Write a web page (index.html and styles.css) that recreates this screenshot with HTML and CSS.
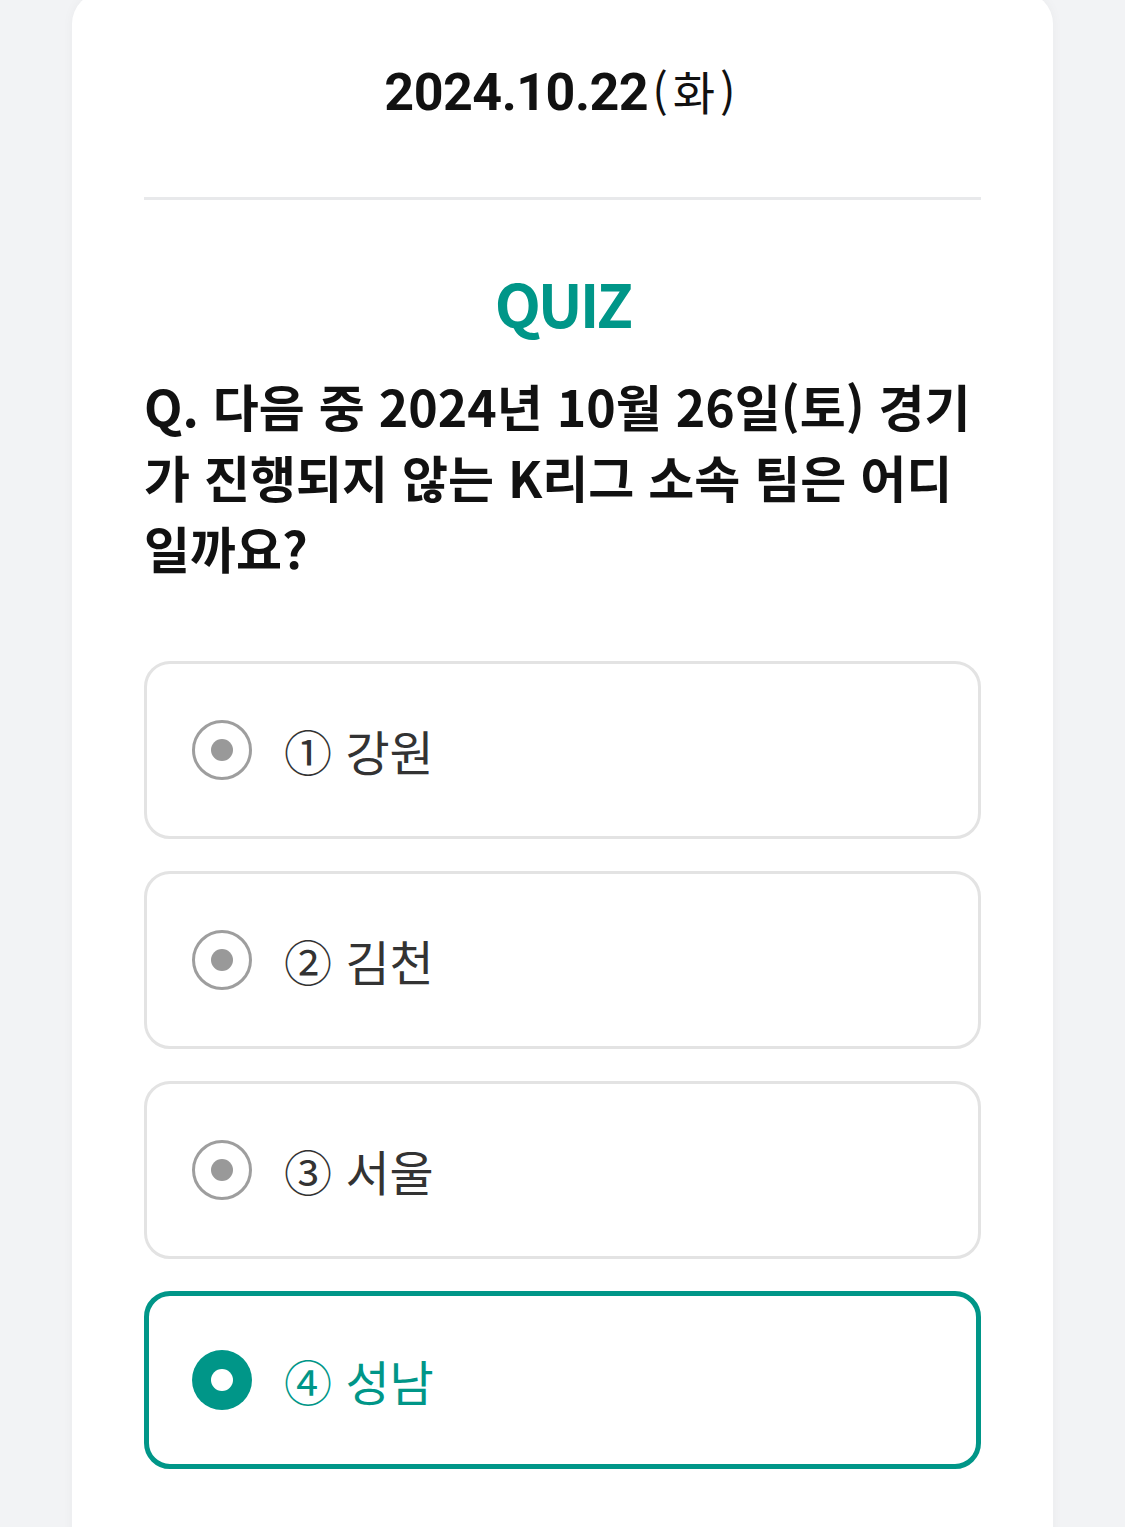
FILE: index.html
```html
<!DOCTYPE html>
<html lang="ko">
<head>
    <meta charset="UTF-8">
    <meta name="viewport" content="width=device-width, initial-scale=1.0">
    <title>Quiz</title>
    <link rel="stylesheet" href="styles.css">
</head>
<body>
    <div class="card">
        <div class="date">2024.10.22<span class="day">(화)</span></div>

        <hr class="divider">

        <h2 class="quiz-title">QUIZ</h2>
        <p class="question">Q. 다음 중 2024년 10월 26일(토) 경기가 진행되지 않는 K리그 소속 팀은 어디일까요?</p>

        <div class="options">
            <label class="option">
                <span class="radio"></span>
                <span class="option-text">① 강원</span>
            </label>
            <label class="option">
                <span class="radio"></span>
                <span class="option-text">② 김천</span>
            </label>
            <label class="option">
                <span class="radio"></span>
                <span class="option-text">③ 서울</span>
            </label>
            <label class="option selected">
                <span class="radio"></span>
                <span class="option-text">④ 성남</span>
            </label>
        </div>
    </div>
</body>
</html>
```

FILE: styles.css
```css
/* 기본 스타일 */
body {
    margin: 0;
    padding: 0 72px;
    background-color: #f2f3f5;
    font-family: Roboto, "Noto Sans CJK KR", sans-serif;
    color: #111;
}

.card {
    margin-top: -8px;
    padding: 68px 72px 80px;
    min-height: 1500px;
    background-color: #ffffff;
    border-radius: 32px;
    box-shadow: 0 0 12px rgba(0, 0, 0, 0.04);
}

.date {
    text-align: center;
    font-family: Roboto, sans-serif;
    font-size: 52px;
    font-weight: 700;
    line-height: 60px;
    letter-spacing: -0.5px;
}

.day {
    font-family: "Noto Sans CJK KR", sans-serif;
    font-weight: 400;
    font-size: 46px;
    letter-spacing: 5px;
    margin-left: 4px;
}

.divider {
    border: none;
    height: 3px;
    background-color: #e8e9eb;
    margin: 74px 0 0;
}

.quiz-title {
    margin: 66px 0 0;
    text-align: center;
    color: #009688;
    font-family: "Noto Sans CJK KR", sans-serif;
    font-size: 60px;
    font-weight: 700;
    line-height: 72px;
    letter-spacing: -3px;
}

.question {
    margin: 32px 0 0;
    font-family: "Noto Sans CJK KR", sans-serif;
    font-size: 50px;
    font-weight: 700;
    line-height: 71px;
    color: #111;
}

.options {
    display: flex;
    flex-direction: column;
    gap: 32px;
    margin-top: 78px;
}

.option {
    display: flex;
    align-items: center;
    gap: 32px;
    height: 178px;
    box-sizing: border-box;
    padding: 0 45px;
    border: 3px solid #e3e3e3;
    border-radius: 26px;
}

.radio {
    position: relative;
    width: 60px;
    height: 60px;
    box-sizing: border-box;
    border: 3px solid #9e9e9e;
    border-radius: 50%;
    flex-shrink: 0;
}

.radio::after {
    content: "";
    position: absolute;
    top: 50%;
    left: 50%;
    width: 22px;
    height: 22px;
    margin: -11px 0 0 -11px;
    border-radius: 50%;
    background-color: #999;
}

.option-text {
    font-family: "Noto Sans CJK KR", sans-serif;
    font-size: 48px;
    color: #333;
}

.option.selected {
    border: 5px solid #009688;
    padding: 0 43px;
}

.option.selected .radio {
    border: none;
    background-color: #009688;
}

.option.selected .radio::after {
    background-color: #ffffff;
}

.option.selected .option-text {
    color: #009688;
}
```
